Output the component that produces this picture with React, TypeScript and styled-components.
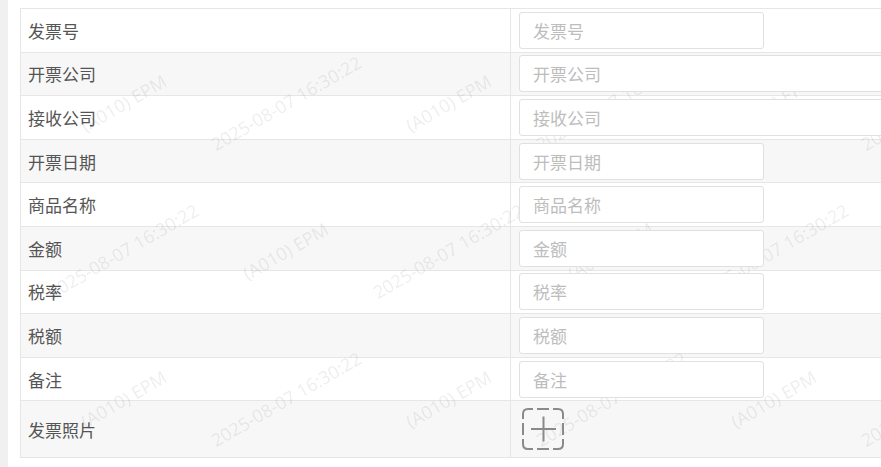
import React from 'react';
import styled, { createGlobalStyle } from 'styled-components';

const GlobalStyle = createGlobalStyle`
  html, body {
    margin: 0;
    padding: 0;
    overflow: hidden;
    background: #fff;
    font-family: "Noto Sans CJK SC", "Noto Sans", sans-serif;
  }
`;

const Page = styled.div`
  display: flex;
  height: 100vh;
`;

const SideEdge = styled.div`
  width: 8px;
  flex-shrink: 0;
  background: #f0f0f0;
`;

const Main = styled.div`
  flex: 1;
  position: relative;
  overflow: hidden;
  padding: 8px 0 0 12px;
`;

const Table = styled.div`
  width: 1100px;
  border: 1px solid #e6e6e6;
  position: relative;
`;

const Row = styled.div<{ $alt?: boolean; $tall?: boolean }>`
  display: grid;
  grid-template-columns: 490px 1fr;
  min-height: ${(p) => (p.$tall ? '56px' : '42.6px')};
  background: ${(p) => (p.$alt ? '#f7f7f7' : '#fff')};
  & + & {
    border-top: 1px solid #e6e6e6;
  }
`;

const LabelCell = styled.div`
  display: flex;
  align-items: center;
  padding: 0 7px;
  border-right: 1px solid #e6e6e6;
  font-size: 17px;
  color: #555;
`;

const FieldCell = styled.div`
  display: flex;
  align-items: center;
  padding: 0 8px;
`;

const Input = styled.input<{ $wide?: boolean }>`
  position: relative;
  z-index: 2;
  box-sizing: border-box;
  width: ${(p) => (p.$wide ? '100%' : '245px')};
  height: 37px;
  padding: 0 13px;
  border: 1px solid #e0e0e0;
  border-radius: 3px;
  background: #fff;
  font-family: inherit;
  font-size: 17px;
  color: #333;
  outline: none;
  &::placeholder {
    color: #bdbdbd;
  }
`;

const UploadBox = styled.div`
  position: relative;
  z-index: 2;
  width: 42px;
  height: 42px;
  margin-left: 3px;
  color: #8a8a8a;
  cursor: pointer;
`;

const Watermark = styled.div`
  position: absolute;
  top: 29px;
  left: 34px;
  z-index: 1;
  pointer-events: none;
  display: grid;
  grid-template-columns: repeat(6, 162.5px);
  grid-auto-rows: 148px;
`;

const Mark = styled.div`
  display: flex;
  align-items: center;
  justify-content: center;
  span {
    transform: rotate(-30deg);
    white-space: nowrap;
    font-family: "Noto Sans", sans-serif;
    font-size: 18px;
    color: rgba(0, 0, 0, 0.085);
  }
`;

const fields = [
  { label: '发票号' },
  { label: '开票公司', wide: true },
  { label: '接收公司', wide: true },
  { label: '开票日期' },
  { label: '商品名称' },
  { label: '金额' },
  { label: '税率' },
  { label: '税额' },
  { label: '备注' },
];

function UploadIcon() {
  return (
    <svg width="42" height="42" viewBox="0 0 42 42" fill="none" stroke="currentColor" strokeWidth="2" strokeLinecap="butt">
      <path d="M1 11V6Q1 1 6 1H11" />
      <path d="M15 1H27" />
      <path d="M31 1H36Q41 1 41 6V11" />
      <path d="M41 15V27" />
      <path d="M41 31V36Q41 41 36 41H31" />
      <path d="M27 41H15" />
      <path d="M11 41H6Q1 41 1 36V31" />
      <path d="M1 27V15" />
      <path d="M9 21H34M21.5 8.5V33.5" />
    </svg>
  );
}

export default function App() {
  const marks = [];
  for (let r = 0; r < 3; r++) {
    for (let c = 0; c < 6; c++) {
      marks.push(
        <Mark key={`${r}-${c}`}>
          <span>{(r + c) % 2 === 0 ? '(A010) EPM' : '2025-08-07 16:30:22'}</span>
        </Mark>
      );
    }
  }

  return (
    <>
      <GlobalStyle />
      <Page>
        <SideEdge />
        <Main>
          <Table>
            {fields.map((f, i) => (
              <Row key={f.label} $alt={i % 2 === 1}>
                <LabelCell>{f.label}</LabelCell>
                <FieldCell>
                  <Input placeholder={f.label} $wide={f.wide} />
                </FieldCell>
              </Row>
            ))}
            <Row $alt $tall>
              <LabelCell>发票照片</LabelCell>
              <FieldCell>
                <UploadBox>
                  <UploadIcon />
                </UploadBox>
              </FieldCell>
            </Row>
          </Table>
          <Watermark>{marks}</Watermark>
        </Main>
      </Page>
    </>
  );
}
